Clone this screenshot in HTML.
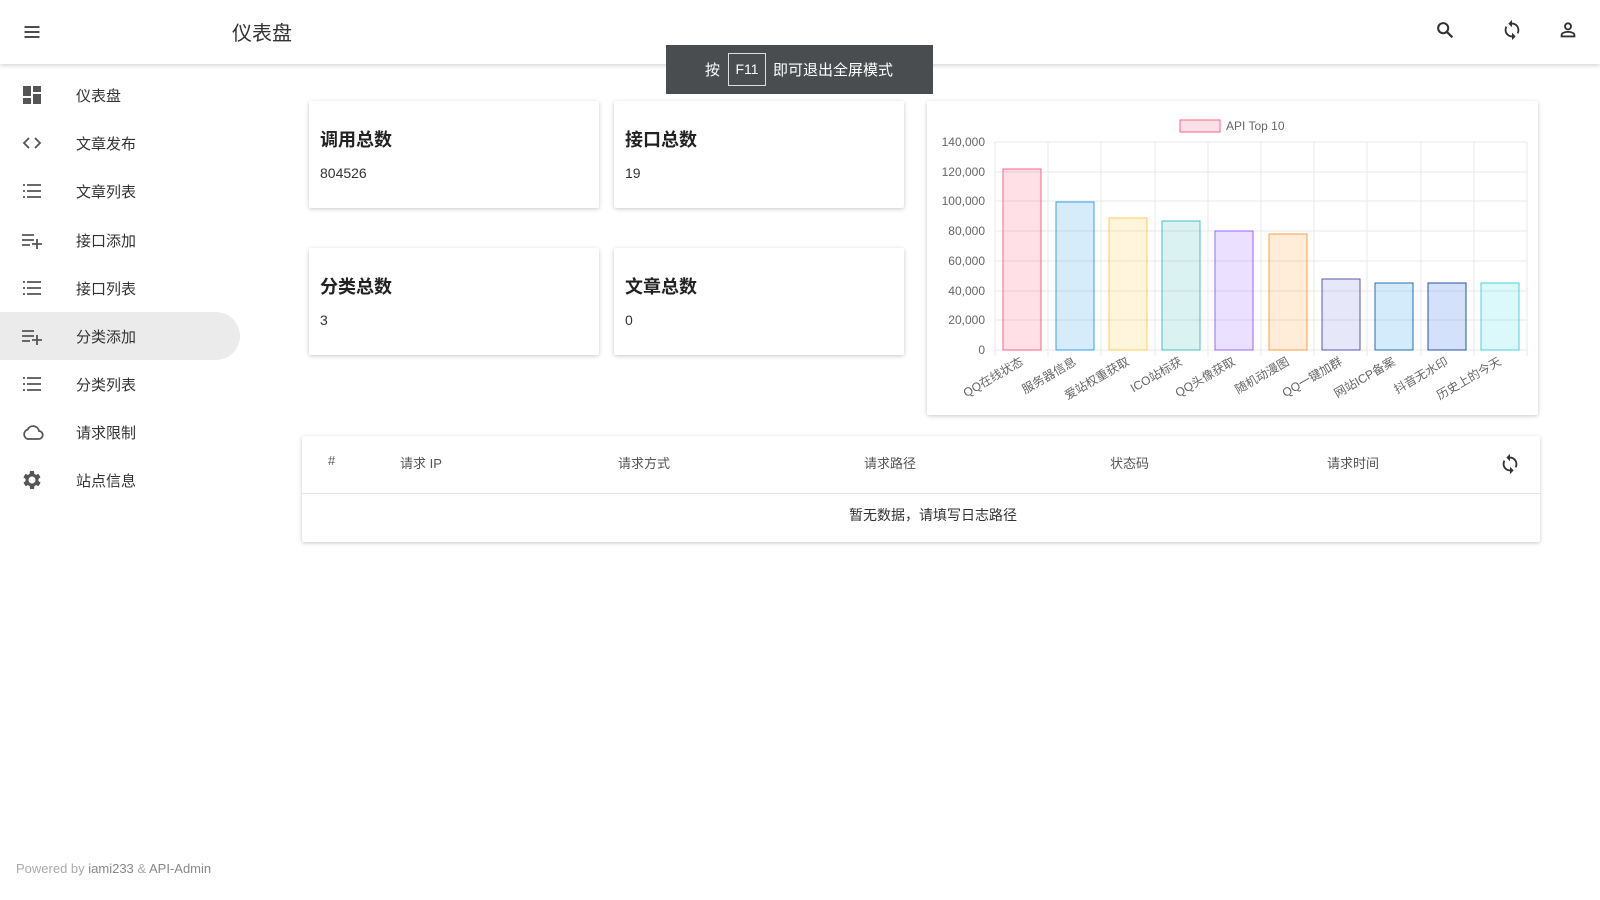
<!DOCTYPE html>
<html><head><meta charset="utf-8"><style>
*{margin:0;padding:0;box-sizing:border-box}
body{width:1600px;height:900px;background:#fff;font-family:"Liberation Sans","Noto Sans CJK SC",sans-serif;color:#333;position:relative;overflow:hidden}
.hdr{position:absolute;left:0;top:0;width:1600px;height:64px;background:#fff;box-shadow:0 2px 4px rgba(0,0,0,.15);z-index:2}
.abs{position:absolute}
.nav{position:absolute;left:0;width:240px;height:48px;display:flex;align-items:center}
.nav svg{position:absolute;left:20px;top:12px}
.nav span{position:absolute;left:76px;font-size:15px;color:#333}
.nav.act{background:#ebebeb;border-radius:0 24px 24px 0}
.card{position:absolute;background:#fff;box-shadow:0 1px 4px rgba(0,0,0,.22);border-radius:2px}
.card h3{position:absolute;left:11px;top:25px;font-size:18px;font-weight:bold;color:#222}
.card p{position:absolute;left:11px;top:64px;font-size:14px;color:#333}
.th{position:absolute;top:453px;font-size:13px;color:#555}
</style></head><body>
<div class="hdr">
 <svg class="abs" style="left:22px;top:22px" width="20" height="20" viewBox="0 0 24 24"><path d="M3 6h18M3 12h18M3 18h18" stroke="#333" stroke-width="2.2"/></svg>
 <div class="abs" style="left:232px;top:17px;font-size:20px;color:#333">仪表盘</div>
 <svg class="abs" style="left:1434px;top:19px" width="22" height="22" viewBox="0 0 24 24"><circle cx="10" cy="10" r="5.5" fill="none" stroke="#333" stroke-width="2.2"/><path d="M14 14l6 6" stroke="#333" stroke-width="2.4"/></svg>
 <svg class="abs" style="left:1501px;top:19px" width="22" height="22" viewBox="0 0 24 24"><path d="M12 4V1L8 5l4 4V6c3.3 0 6 2.7 6 6 0 1-.25 2-.7 2.8l1.5 1.5C19.5 15 20 13.6 20 12c0-4.4-3.6-8-8-8zm0 14c-3.3 0-6-2.7-6-6 0-1 .25-2 .7-2.8L5.2 7.7C4.5 9 4 10.4 4 12c0 4.4 3.6 8 8 8v3l4-4-4-4v3z" fill="#333"/></svg>
 <svg class="abs" style="left:1557px;top:19px" width="22" height="22" viewBox="0 0 24 24"><circle cx="12" cy="8" r="3.3" fill="none" stroke="#333" stroke-width="2"/><path d="M5 19v-1.5c0-2.5 4.5-3.5 7-3.5s7 1 7 3.5V19z" fill="none" stroke="#333" stroke-width="2"/></svg>
</div>
<div class="abs" style="left:666px;top:45px;width:267px;height:49px;background:#4a4d50;z-index:3;color:#fff;font-size:15px">
 <span class="abs" style="left:39px;top:14px">按</span>
 <span class="abs" style="left:62px;top:8px;width:38px;height:33px;border:1px solid #ddd;text-align:center;line-height:31px;font-size:14px">F11</span>
 <span class="abs" style="left:107px;top:14px">即可退出全屏模式</span>
</div>

<div class="nav" style="top:71px"><svg width="24" height="24" viewBox="0 0 24 24"><path d="M3 13h8V3H3zm0 8h8v-6H3zm10 0h8V11h-8zm0-18v6h8V3z" fill="#555"/></svg><span>仪表盘</span></div>
<div class="nav" style="top:119px"><svg width="24" height="24" viewBox="0 0 24 24"><path d="M9 7l-5 5 5 5M15 7l5 5-5 5" fill="none" stroke="#555" stroke-width="1.8"/></svg><span>文章发布</span></div>
<div class="nav" style="top:167px"><svg width="24" height="24" viewBox="0 0 24 24"><path d="M7 6h14M7 12h14M7 18h14M3 6h2M3 12h2M3 18h2" stroke="#555" stroke-width="1.8"/></svg><span>文章列表</span></div>
<div class="nav" style="top:216px"><svg width="24" height="24" viewBox="0 0 24 24"><path d="M2 7h12M2 12h12M2 17h8M17 11v10M12 16h10" stroke="#555" stroke-width="1.8"/></svg><span>接口添加</span></div>
<div class="nav" style="top:264px"><svg width="24" height="24" viewBox="0 0 24 24"><path d="M7 6h14M7 12h14M7 18h14M3 6h2M3 12h2M3 18h2" stroke="#555" stroke-width="1.8"/></svg><span>接口列表</span></div>
<div class="nav act" style="top:312px"><svg width="24" height="24" viewBox="0 0 24 24"><path d="M2 7h12M2 12h12M2 17h8M17 11v10M12 16h10" stroke="#555" stroke-width="1.8"/></svg><span>分类添加</span></div>
<div class="nav" style="top:360px"><svg width="24" height="24" viewBox="0 0 24 24"><path d="M7 6h14M7 12h14M7 18h14M3 6h2M3 12h2M3 18h2" stroke="#555" stroke-width="1.8"/></svg><span>分类列表</span></div>
<div class="nav" style="top:408px"><svg width="26" height="24" viewBox="0 0 24 24"><path d="M6.5 19h11a4 4 0 0 0 .5-8 6 6 0 0 0-11.3-1.5A5 5 0 0 0 6.5 19z" fill="none" stroke="#555" stroke-width="1.8"/></svg><span>请求限制</span></div>
<div class="nav" style="top:456px"><svg width="24" height="24" viewBox="0 0 24 24"><path d="M19.4 13a7.5 7.5 0 0 0 0-2l2.1-1.6-2-3.5-2.5 1a7 7 0 0 0-1.7-1L15 3h-4l-.4 2.9a7 7 0 0 0-1.7 1l-2.5-1-2 3.5L6.6 11a7.5 7.5 0 0 0 0 2l-2.1 1.6 2 3.5 2.5-1a7 7 0 0 0 1.7 1L11 21h4l.4-2.9a7 7 0 0 0 1.7-1l2.5 1 2-3.5zM13 15.5a3.5 3.5 0 1 1 0-7 3.5 3.5 0 0 1 0 7z" fill="#555" transform="translate(-1 0)"/></svg><span>站点信息</span></div>

<div class="card" style="left:309px;top:101px;width:290px;height:107px"><h3>调用总数</h3><p>804526</p></div>
<div class="card" style="left:614px;top:101px;width:290px;height:107px"><h3>接口总数</h3><p>19</p></div>
<div class="card" style="left:309px;top:248px;width:290px;height:107px"><h3>分类总数</h3><p>3</p></div>
<div class="card" style="left:614px;top:248px;width:290px;height:107px"><h3>文章总数</h3><p>0</p></div>

<div class="card" style="left:927px;top:101px;width:611px;height:314px"></div>
<svg class="abs" style="left:0;top:0" width="1600" height="900" font-family="Liberation Sans,Noto Sans CJK SC,sans-serif" font-size="12" fill="#666">
 <rect x="1180" y="120" width="40" height="12" fill="rgba(255,99,132,.2)" stroke="rgb(255,99,132)"/>
 <text x="1226" y="130" font-size="12">API Top 10</text>
 <g stroke="#e8e8e8" stroke-width="1">
  <line x1="995" y1="142" x2="1527" y2="142"/><line x1="995" y1="172" x2="1527" y2="172"/><line x1="995" y1="201" x2="1527" y2="201"/><line x1="995" y1="231" x2="1527" y2="231"/><line x1="995" y1="261" x2="1527" y2="261"/><line x1="995" y1="291" x2="1527" y2="291"/><line x1="995" y1="320" x2="1527" y2="320"/><line x1="995" y1="350" x2="1527" y2="350"/>
  <line x1="995" y1="142" x2="995" y2="356"/><line x1="1048" y1="142" x2="1048" y2="356"/><line x1="1101" y1="142" x2="1101" y2="356"/><line x1="1155" y1="142" x2="1155" y2="356"/><line x1="1208" y1="142" x2="1208" y2="356"/><line x1="1261" y1="142" x2="1261" y2="356"/><line x1="1314" y1="142" x2="1314" y2="356"/><line x1="1367" y1="142" x2="1367" y2="356"/><line x1="1421" y1="142" x2="1421" y2="356"/><line x1="1474" y1="142" x2="1474" y2="356"/><line x1="1527" y1="142" x2="1527" y2="356"/>
 </g>
 <g text-anchor="end" font-size="12">
  <text x="985" y="146">140,000</text><text x="985" y="176">120,000</text><text x="985" y="205">100,000</text><text x="985" y="235">80,000</text><text x="985" y="265">60,000</text><text x="985" y="295">40,000</text><text x="985" y="324">20,000</text><text x="985" y="354">0</text>
 </g>
 <rect x="1003" y="169" width="38" height="181" fill="rgba(255,99,132,.2)" stroke="rgb(255,99,132)"/>
 <rect x="1056" y="202" width="38" height="148" fill="rgba(54,162,235,.2)" stroke="rgb(54,162,235)"/>
 <rect x="1109" y="218" width="38" height="132" fill="rgba(255,206,86,.2)" stroke="rgb(255,206,86)"/>
 <rect x="1162" y="221" width="38" height="129" fill="rgba(75,192,192,.2)" stroke="rgb(75,192,192)"/>
 <rect x="1215" y="231" width="38" height="119" fill="rgba(153,102,255,.2)" stroke="rgb(153,102,255)"/>
 <rect x="1269" y="234" width="38" height="116" fill="rgba(255,159,64,.2)" stroke="rgb(255,159,64)"/>
 <rect x="1322" y="279" width="38" height="71" fill="rgba(120,120,230,.18)" stroke="rgb(90,90,180)"/>
 <rect x="1375" y="283" width="38" height="67" fill="rgba(54,162,235,.22)" stroke="rgb(40,110,180)"/>
 <rect x="1428" y="283" width="38" height="67" fill="rgba(54,120,235,.22)" stroke="rgb(40,80,170)"/>
 <rect x="1481" y="283" width="38" height="67" fill="rgba(75,220,230,.2)" stroke="rgb(75,210,220)"/>
 <g text-anchor="end" font-size="12">
  <text transform="translate(1024 364) rotate(-30)">QQ在线状态</text>
  <text transform="translate(1077 364) rotate(-30)">服务器信息</text>
  <text transform="translate(1130 364) rotate(-30)">爱站权重获取</text>
  <text transform="translate(1183 364) rotate(-30)">ICO站标获</text>
  <text transform="translate(1236 364) rotate(-30)">QQ头像获取</text>
  <text transform="translate(1290 364) rotate(-30)">随机动漫图</text>
  <text transform="translate(1343 364) rotate(-30)">QQ一键加群</text>
  <text transform="translate(1396 364) rotate(-30)">网站ICP备案</text>
  <text transform="translate(1449 364) rotate(-30)">抖音无水印</text>
  <text transform="translate(1502 364) rotate(-30)">历史上的今天</text>
 </g>
</svg>

<div class="card" style="left:302px;top:436px;width:1238px;height:106px">
 <div class="abs" style="left:0;top:57px;width:100%;height:1px;background:#e5e5e5"></div>
</div>
<div class="th" style="left:328px">#</div>
<div class="th" style="left:400px">请求 IP</div>
<div class="th" style="left:618px">请求方式</div>
<div class="th" style="left:864px">请求路径</div>
<div class="th" style="left:1110px">状态码</div>
<div class="th" style="left:1327px">请求时间</div>
<svg class="abs" style="left:1499px;top:453px" width="22" height="22" viewBox="0 0 24 24"><path d="M12 4V1L8 5l4 4V6c3.3 0 6 2.7 6 6 0 1-.25 2-.7 2.8l1.5 1.5C19.5 15 20 13.6 20 12c0-4.4-3.6-8-8-8zm0 14c-3.3 0-6-2.7-6-6 0-1 .25-2 .7-2.8L5.2 7.7C4.5 9 4 10.4 4 12c0 4.4 3.6 8 8 8v3l4-4-4-4v3z" fill="#333"/></svg>
<div class="abs" style="left:783px;top:505px;width:300px;text-align:center;font-size:14px;color:#333">暂无数据，请填写日志路径</div>

<div class="abs" style="left:16px;top:861px;font-size:13px;color:#aaa">Powered by <span style="color:#888">iami233</span> &amp; <span style="color:#888">API-Admin</span></div>
</body></html>
